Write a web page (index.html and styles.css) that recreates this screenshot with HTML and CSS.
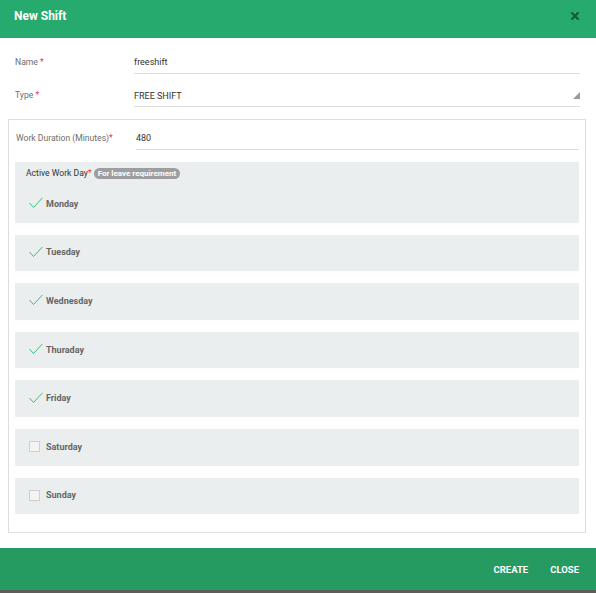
FILE: index.html
```html
<!DOCTYPE html>
<html>
<head>
<meta charset="utf-8">
<link rel="stylesheet" href="styles.css">
</head>
<body>
<div class="dialog">
  <div class="header">
    <div class="title">New Shift</div>
    <svg class="close-x" width="8" height="8" viewBox="0 0 8 8"><path d="M1 1 L7 7 M7 1 L1 7" stroke="#175a3a" stroke-width="2.2" stroke-linecap="square"/></svg>
  </div>
  <div class="body">
    <div class="row row-name">
      <div class="label">Name <span class="req">*</span></div>
      <div class="input">freeshift</div>
    </div>
    <div class="row row-type">
      <div class="label">Type <span class="req">*</span></div>
      <div class="input select">FREE SHIFT
        <svg class="tri" width="7" height="7" viewBox="0 0 7 7"><polygon points="7,0 7,7 0,7" fill="#9a9a9a"/></svg>
      </div>
    </div>
    <div class="fieldset">
      <div class="row row-dur">
        <div class="label">Work Duration (Minutes)<span class="req">*</span></div>
        <div class="input">480</div>
      </div>
      <div class="groups">
        <div class="group">
          <div class="group-title">Active Work Day<span class="req">*</span><span class="badge">For leave requirement</span></div>
          <div class="day"><svg class="check" width="14" height="12" viewBox="0 0 14 12"><path d="M0.5 6 L4.5 10.5 L13.5 0.8" fill="none" stroke="#3cbf7a" stroke-width="1"/></svg>Monday</div>
        </div>
        <div class="group"><div class="day"><svg class="check" width="14" height="12" viewBox="0 0 14 12"><path d="M0.5 6 L4.5 10.5 L13.5 0.8" fill="none" stroke="#3cbf7a" stroke-width="1"/></svg>Tuesday</div></div>
        <div class="group"><div class="day"><svg class="check" width="14" height="12" viewBox="0 0 14 12"><path d="M0.5 6 L4.5 10.5 L13.5 0.8" fill="none" stroke="#3cbf7a" stroke-width="1"/></svg>Wednesday</div></div>
        <div class="group"><div class="day"><svg class="check" width="14" height="12" viewBox="0 0 14 12"><path d="M0.5 6 L4.5 10.5 L13.5 0.8" fill="none" stroke="#3cbf7a" stroke-width="1"/></svg>Thuraday</div></div>
        <div class="group"><div class="day"><svg class="check" width="14" height="12" viewBox="0 0 14 12"><path d="M0.5 6 L4.5 10.5 L13.5 0.8" fill="none" stroke="#3cbf7a" stroke-width="1"/></svg>Friday</div></div>
        <div class="group"><div class="day"><span class="box"></span>Saturday</div></div>
        <div class="group"><div class="day"><span class="box"></span>Sunday</div></div>
      </div>
    </div>
  </div>
  <div class="footer">
    <span class="btn">CREATE</span>
    <span class="btn">CLOSE</span>
  </div>
</div>
</body>
</html>
```
FILE: styles.css
```css
html, body {
  margin: 0;
  padding: 0;
}
body {
  background: #5c5c5c;
  font-family: Roboto, "Liberation Sans", sans-serif;
  width: 596px;
  height: 593px;
  overflow: hidden;
}
.dialog {
  width: 596px;
  height: 590px;
  background: #fff;
  display: flex;
  flex-direction: column;
}
.header {
  height: 38px;
  flex: none;
  background: #27aa6e;
  display: flex;
  align-items: flex-start;
  justify-content: space-between;
  padding: 8px 17px 0 14px;
  box-sizing: border-box;
}
.title {
  color: #fff;
  font-weight: 700;
  font-size: 12px;
  line-height: 16px;
}
.close-x {
  margin-top: 4px;
}
.body {
  flex: 1;
  padding: 12px 10px 0 8px;
  box-sizing: border-box;
}
.row {
  display: grid;
  grid-template-columns: 119px 1fr;
  align-items: center;
  padding: 0 6px 0 7px;
}
.label {
  font-size: 8.6px;
  color: #6e6e6e;
}
.req {
  color: #e53935;
}
.input {
  height: 24px;
  box-sizing: border-box;
  border-bottom: 1px solid #dcdcdc;
  font-size: 9px;
  color: #333;
  display: flex;
  align-items: center;
  padding-top: 1px;
}
.select {
  position: relative;
}
.row-type .input {
  padding-top: 3px;
}
.tri {
  position: absolute;
  right: 0;
  top: 9px;
}
.row-type {
  margin-top: 9px;
}
.fieldset {
  margin-top: 12px;
  border: 1px solid #dddddd;
  padding: 5px 6px 18px 6px;
}
.row-dur {
  grid-template-columns: 120px 1fr;
  padding: 0 0 0 1px;
}
.row-dur .input {
  height: 25px;
}
.groups {
  margin-top: 12px;
  display: flex;
  flex-direction: column;
  gap: 12px;
}
.group {
  background: #ebeeee;
  padding-left: 14px;
}
.group-title {
  height: 24px;
  box-sizing: border-box;
  padding-top: 6px;
  margin-left: -3px;
  font-size: 8.6px;
  color: #333;
  display: flex;
  align-items: flex-start;
  line-height: 11px;
}
.badge {
  display: inline-block;
  background: #9e9e9e;
  color: #fff;
  font-weight: 700;
  font-size: 8px;
  line-height: 11px;
  height: 11px;
  padding: 0 4px;
  border-radius: 6px;
  margin-left: 2px;
}
.day {
  height: 36.6px;
  box-sizing: border-box;
  padding-bottom: 1px;
  display: flex;
  align-items: center;
  font-size: 9px;
  font-weight: 700;
  color: #666;
}
.check {
  width: 14px;
  margin-right: 3px;
  margin-top: -1px;
}
.box {
  display: inline-block;
  width: 11px;
  height: 11px;
  box-sizing: border-box;
  border: 1px solid #cfcfcf;
  background: #f3f5f5;
  margin-right: 6px;
}
.footer {
  height: 42px;
  flex: none;
  background: #259a61;
  display: flex;
  justify-content: flex-end;
  align-items: center;
  gap: 22px;
  padding: 0 17px 0 0;
}
.btn {
  color: #fff;
  font-weight: 700;
  font-size: 9.5px;
  letter-spacing: 0;
}
```
